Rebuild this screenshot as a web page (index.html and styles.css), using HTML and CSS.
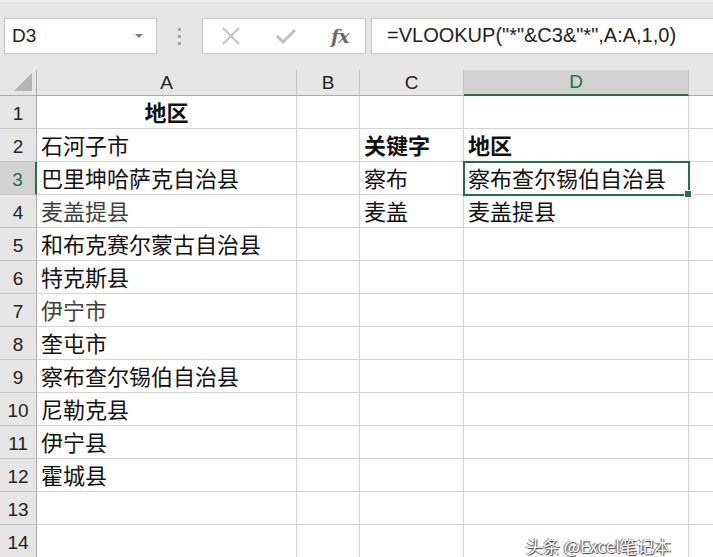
FILE: index.html
```html
<!DOCTYPE html>
<html lang="zh">
<head>
<meta charset="utf-8">
<link rel="stylesheet" href="styles.css">
</head>
<body>
<div class="app">
  <div class="toolbar">
    <div class="namebox">
      <span class="ref">D3</span>
      <svg class="caret" width="10" height="6" viewBox="0 0 10 6"><path d="M1 1 L5 5 L9 1 Z" fill="#7a7a7a"/></svg>
    </div>
    <div class="grip"><span></span><span></span><span></span></div>
    <div class="iconbox">
      <svg class="ico" width="20" height="18" viewBox="0 0 20 18"><path d="M2 1 L18 17 M18 1 L2 17" stroke="#c2c2c2" stroke-width="2.2" fill="none"/></svg>
      <svg class="ico" width="22" height="18" viewBox="0 0 22 18"><path d="M2 9 L8 15 L20 3" stroke="#c2c2c2" stroke-width="3" fill="none"/></svg>
      <span class="fx">fx</span>
    </div>
    <div class="formula">=VLOOKUP("*"&amp;C3&amp;"*",A:A,1,0)</div>
  </div>
  <div class="sheet">
    <div class="corner"><svg width="20" height="20" viewBox="0 0 20 20"><path d="M19 1 L19 19 L1 19 Z" fill="#b4b4b4"/></svg></div>
    <div class="ch">A</div>
    <div class="ch">B</div>
    <div class="ch">C</div>
    <div class="ch sel">D</div>
    <div class="ch last"></div>

    <div class="rh">1</div><div class="c center bold">地区</div><div class="c"></div><div class="c"></div><div class="c"></div><div class="c last"></div>
    <div class="rh">2</div><div class="c">石河子市</div><div class="c"></div><div class="c bold">关键字</div><div class="c bold">地区</div><div class="c last"></div>
    <div class="rh sel">3</div><div class="c">巴里坤哈萨克自治县</div><div class="c"></div><div class="c">察布</div><div class="c active">察布查尔锡伯自治县<span class="handle"></span></div><div class="c last"></div>
    <div class="rh">4</div><div class="c gray">麦盖提县</div><div class="c"></div><div class="c">麦盖</div><div class="c">麦盖提县</div><div class="c last"></div>
    <div class="rh">5</div><div class="c">和布克赛尔蒙古自治县</div><div class="c"></div><div class="c"></div><div class="c"></div><div class="c last"></div>
    <div class="rh">6</div><div class="c">特克斯县</div><div class="c"></div><div class="c"></div><div class="c"></div><div class="c last"></div>
    <div class="rh">7</div><div class="c gray">伊宁市</div><div class="c"></div><div class="c"></div><div class="c"></div><div class="c last"></div>
    <div class="rh">8</div><div class="c">奎屯市</div><div class="c"></div><div class="c"></div><div class="c"></div><div class="c last"></div>
    <div class="rh">9</div><div class="c">察布查尔锡伯自治县</div><div class="c"></div><div class="c"></div><div class="c"></div><div class="c last"></div>
    <div class="rh">10</div><div class="c">尼勒克县</div><div class="c"></div><div class="c"></div><div class="c"></div><div class="c last"></div>
    <div class="rh">11</div><div class="c">伊宁县</div><div class="c"></div><div class="c"></div><div class="c"></div><div class="c last"></div>
    <div class="rh">12</div><div class="c">霍城县</div><div class="c"></div><div class="c"></div><div class="c"></div><div class="c last"></div>
    <div class="rh">13</div><div class="c"></div><div class="c"></div><div class="c"></div><div class="c"></div><div class="c last"></div>
    <div class="rh">14</div><div class="c"></div><div class="c"></div><div class="c"></div><div class="c"></div><div class="c last"></div>
  </div>
  <div class="watermark">头条 @Excel笔记本</div>
</div>
</body>
</html>
```
FILE: styles.css
```css
html, body {
  margin: 0;
  padding: 0;
  background: #e6e6e6;
}
.app {
  position: relative;
  width: 713px;
  height: 557px;
  overflow: hidden;
  font-family: "Liberation Sans", Arial, "Noto Sans CJK SC", sans-serif;
  background: #e6e6e6;
  border-top: 2px solid #f0f0f0;
  box-sizing: border-box;
}
.toolbar {
  height: 68px;
  box-sizing: border-box;
  padding-top: 16px;
  display: flex;
  align-items: flex-start;
}
.namebox {
  margin-left: 4px;
  width: 153px;
  height: 36px;
  box-sizing: border-box;
  background: #fff;
  border: 1px solid #c6c6c6;
  display: flex;
  align-items: center;
  justify-content: space-between;
  padding: 0 12px 0 7px;
}
.ref {
  font-size: 19px;
  color: #222;
}
.grip {
  width: 45px;
  height: 36px;
  display: flex;
  flex-direction: column;
  align-items: center;
  justify-content: center;
  gap: 4px;
}
.grip span {
  width: 3px;
  height: 3px;
  background: #a8a8a8;
}
.iconbox {
  width: 164px;
  height: 36px;
  box-sizing: border-box;
  background: #fff;
  border: 1px solid #c6c6c6;
  display: flex;
  align-items: center;
  padding-left: 18px;
  gap: 34px;
}
.fx {
  font-family: "DejaVu Serif", "Liberation Serif", serif;
  font-style: italic;
  font-weight: bold;
  font-size: 19px;
  color: #6a6a6a;
  letter-spacing: -1px;
}
.formula {
  margin-left: 5px;
  flex: 1;
  height: 36px;
  box-sizing: border-box;
  background: #fff;
  border: 1px solid #c6c6c6;
  border-right: none;
  padding-left: 15px;
  font-size: 20px;
  line-height: 33px;
  color: #222;
  white-space: nowrap;
}
.sheet {
  display: grid;
  grid-template-columns: 37px 260px 63px 104px 225px 1fr;
  grid-template-rows: 26px repeat(14, 33px);
  background: #fff;
}
.corner {
  background: #e6e6e6;
  border-right: 1px solid #ababab;
  border-bottom: 1px solid #ababab;
  box-sizing: border-box;
  display: flex;
  align-items: flex-end;
  justify-content: flex-end;
  padding: 0 3px 3px 0;
}
.ch {
  background: #e6e6e6;
  border-right: 1px solid #c4c4c4;
  border-bottom: 1px solid #ababab;
  box-sizing: border-box;
  font-size: 19px;
  color: #222;
  display: flex;
  align-items: center;
  justify-content: center;
}
.ch.sel {
  background: #d2d2d2;
  color: #217346;
  border-bottom: 2px solid #217346;
}
.ch.last {
  border-right: none;
}
.rh {
  background: #e6e6e6;
  border-right: 1px solid #ababab;
  border-bottom: 1px solid #c4c4c4;
  box-sizing: border-box;
  font-size: 19px;
  color: #222;
  display: flex;
  align-items: flex-end;
  justify-content: center;
  padding-bottom: 3px;
}
.rh.sel {
  background: #d2d2d2;
  color: #217346;
  border-right: 2px solid #217346;
}
.c {
  position: relative;
  border-right: 1px solid #d4d4d4;
  border-bottom: 1px solid #d4d4d4;
  box-sizing: border-box;
  font-family: "Noto Sans CJK SC", "Liberation Sans", sans-serif;
  font-size: 22px;
  line-height: 1;
  color: #111;
  padding: 0 0 6px 4px;
  display: flex;
  align-items: flex-end;
  white-space: nowrap;
}
.c.last {
  border-right: none;
}
.c.center {
  justify-content: center;
  padding-left: 0;
}
.c.bold {
  font-weight: bold;
}
.c.gray {
  color: #404040;
}
.c.active {
  outline: 2px solid #217346;
  outline-offset: -1px;
  z-index: 1;
}
.handle {
  position: absolute;
  right: -4px;
  bottom: -4px;
  width: 6px;
  height: 6px;
  background: #217346;
  border: 1px solid #fff;
}
.watermark {
  position: absolute;
  left: 526px;
  top: 535px;
  font-family: "Noto Sans CJK SC", sans-serif;
  font-size: 17px;
  line-height: 1;
  color: #fff;
  text-shadow: 1px 1px 1px #333, -1px 0 1px #555;
  white-space: nowrap;
}
```
